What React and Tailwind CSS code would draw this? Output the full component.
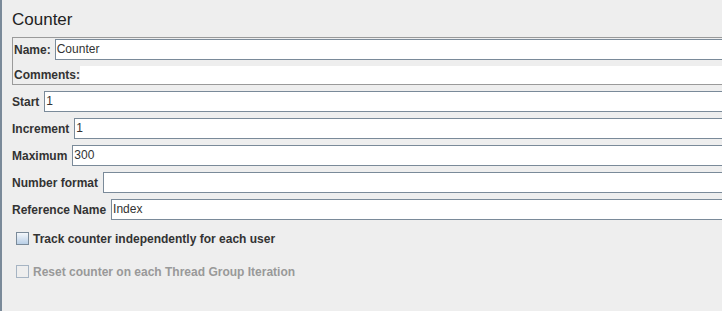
const FIELDS = [
    { label: 'Start', value: '1' },
    { label: 'Increment', value: '1' },
    { label: 'Maximum', value: '300' },
    { label: 'Number format', value: '' },
    { label: 'Reference Name', value: 'Index' }
];

const Field = ({ value }) => (
    <div className="flex-1 h-[21px] border border-[#7a8a99] bg-white pl-[1px] leading-[19px] font-normal text-[#333]">
        {value}
    </div>
);

const Check = ({ label, disabled }) => (
    <div className="flex items-center gap-[4px] ml-[4px] h-[13px]">
        <span
            className={
                disabled
                    ? 'w-[13px] h-[13px] border border-[#a6b4c3] bg-[#eeeeee]'
                    : 'w-[13px] h-[13px] border border-[#7a8a99] bg-gradient-to-b from-[#f4f7fb] to-[#b9cfe6]'
            }
        />
        <span className={disabled ? 'font-bold text-[#999999]' : 'font-bold text-[#333]'}>{label}</span>
    </div>
);

export default function App() {
    return (
        <div className="w-[722px] h-[311px] bg-[#eeeeee] border-l-2 border-[#7a8a99] overflow-hidden font-['Liberation_Sans',Arial,sans-serif] text-[12px] text-[#333]">
            <div className="w-[760px] pl-[10px] pt-[10px]">
                <div className="h-[20px] leading-[20px] text-[17px] text-[#222]">Counter</div>

                {/* Name / comments box */}
                <div className="mt-[7px] border border-[#9a9a9a] pt-[1px] pl-[1px]">
                    <div className="flex items-center gap-[4px] h-[21px]">
                        <span className="font-bold">Name:</span>
                        <Field value="Counter" />
                    </div>
                    <div className="flex items-center mt-[6px] h-[18px]">
                        <span className="font-bold">Comments:</span>
                        <div className="flex-1 h-[18px] bg-white" />
                    </div>
                </div>

                <div className="flex flex-col gap-[6px] mt-[6px]">
                    {FIELDS.map((f) => (
                        <div key={f.label} className="flex items-center gap-[5px] h-[21px]">
                            <span className="font-bold">{f.label}</span>
                            <Field value={f.value} />
                        </div>
                    ))}
                </div>

                <div className="mt-[12px] flex flex-col gap-[20px]">
                    <Check label="Track counter independently for each user" />
                    <Check label="Reset counter on each Thread Group Iteration" disabled />
                </div>
            </div>
        </div>
    );
}
